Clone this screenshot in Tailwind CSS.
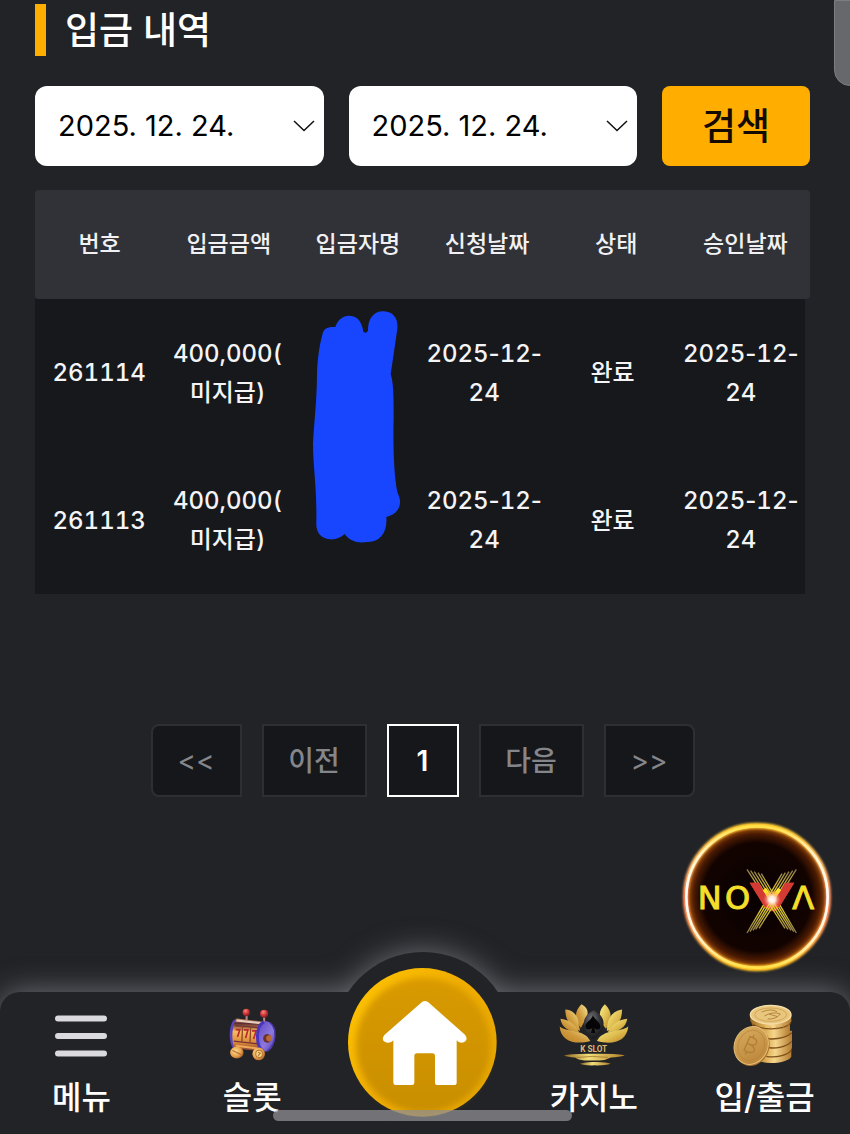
<!DOCTYPE html>
<html lang="ko">
<head>
<meta charset="utf-8">
<meta name="viewport" content="width=device-width, initial-scale=1">
<title>입금 내역</title>
<script src="https://cdn.jsdelivr.net/npm/@tailwindcss/browser@4"></script>
</head>
<body class="min-h-screen flex flex-col overflow-x-hidden bg-[#222326] text-white font-['Inter','Noto_Sans_CJK_KR',sans-serif]">

<main class="flex-1 pt-1 pl-[35px] pr-10">
  <h1 class="h-[52px] border-l-[11px] border-[#ffae00] pl-[19px] text-[37px] leading-[54px] font-medium">입금 내역</h1>

  <form class="mt-[30px] flex gap-[25px]">
    <div class="relative flex-1">
      <select aria-label="시작일" class="h-20 w-full appearance-none rounded-xl bg-white pl-[23px] pr-12 text-[29px] text-black"><option>2025. 12. 24.</option></select>
      <svg class="pointer-events-none absolute right-2 top-[34px] h-3 w-6" viewBox="0 0 24 12" fill="none" stroke="#111" stroke-width="1.5"><path d="M2 1l10 9.500L22 1"/></svg>
    </div>
    <div class="relative flex-1">
      <select aria-label="종료일" class="h-20 w-full appearance-none rounded-xl bg-white pl-[23px] pr-12 text-[29px] text-black"><option>2025. 12. 24.</option></select>
      <svg class="pointer-events-none absolute right-2 top-[34px] h-3 w-6" viewBox="0 0 24 12" fill="none" stroke="#111" stroke-width="1.5"><path d="M2 1l10 9.500L22 1"/></svg>
    </div>
    <button type="button" class="h-20 w-[148px] rounded-lg bg-[#ffae00] text-[37px] leading-none font-medium text-[#140a00]">검색</button>
  </form>

  <table class="mt-6 block text-center text-2xl font-medium tabular-nums">
    <thead class="block">
      <tr class="grid h-[109px] grid-cols-6 items-center rounded-sm bg-[#313237] text-[23px] text-[#f1f1f4]">
        <th class="font-medium">번호</th><th class="font-medium">입금금액</th><th class="font-medium">입금자명</th><th class="font-medium">신청날짜</th><th class="font-medium">상태</th><th class="font-medium">승인날짜</th>
      </tr>
    </thead>
    <tbody class="mr-[5px] block bg-[#17181c] leading-[39px] text-[#f4f4f6]">
      <tr class="grid h-[147px] grid-cols-6 items-center">
        <td>261114</td>
        <td>400,000(<br>미지급)</td>
        <td class="relative h-full">
          <svg class="absolute left-[21px] top-3 h-[232px] w-[88px]" viewBox="38 32 264 696" fill="#1846ff" role="img" aria-label="가려진 이름"><path d="M66 104C68 84 84 78 105 80C112 58 128 46 146 46C168 46 184 60 189 94L196 98L203 92C202 56 220 32 250 33C280 34 294 56 291 86L271 222C280 246 280 300 280 350C278 430 280 520 291 575C296 588 300 596 299 608C297 630 282 644 258 650C262 700 236 727 200 725C172 730 148 722 133 701C116 716 100 718 88 717C62 714 46 696 48 665C50 560 38 500 38 430C40 380 50 300 50 220C51 180 58 130 66 104Z"/></svg>
        </td>
        <td>2025<span class="normal-nums">-</span>12<span class="normal-nums">-</span><br>24</td>
        <td>완료</td>
        <td>2025<span class="normal-nums">-</span>12<span class="normal-nums">-</span><br>24</td>
      </tr>
      <tr class="grid h-[148px] grid-cols-6 items-center">
        <td>261113</td>
        <td>400,000(<br>미지급)</td>
        <td></td>
        <td>2025<span class="normal-nums">-</span>12<span class="normal-nums">-</span><br>24</td>
        <td>완료</td>
        <td>2025<span class="normal-nums">-</span>12<span class="normal-nums">-</span><br>24</td>
      </tr>
    </tbody>
  </table>

  <nav aria-label="페이지" class="mt-[130px] mb-10 flex justify-center gap-5 text-[28px] text-[#85868a]">
    <button type="button" class="h-[73px] w-[91px] rounded-l-lg border-2 border-[#2e2f33] bg-[#16171b]">&lt;&lt;</button>
    <button type="button" class="h-[73px] w-[105px] border-2 border-[#2e2f33] bg-[#16171b] font-medium">이전</button>
    <button type="button" aria-current="page" class="h-[73px] w-[72px] border-2 border-white bg-[#16171b] font-semibold text-white">1</button>
    <button type="button" class="h-[73px] w-[105px] border-2 border-[#2e2f33] bg-[#16171b] font-medium">다음</button>
    <button type="button" class="h-[73px] w-[91px] rounded-r-lg border-2 border-[#2e2f33] bg-[#16171b]">&gt;&gt;</button>
  </nav>
</main>

<div class="fixed -right-4 top-0 h-[86px] w-8 rounded-b-2xl border border-[#7c7d80] bg-[#67686b]"></div>

<footer class="sticky bottom-0 h-[142px]">
  <div class="absolute inset-0 drop-shadow-[0_0_15px_rgba(190,190,200,0.5)]">
    <div class="absolute inset-0 rounded-t-[20px] bg-[#222326]"></div>
    <div class="absolute -top-10 left-1/2 -ml-[92px] size-[180px] rounded-full bg-[#222326]"></div>
  </div>

  <nav aria-label="주 메뉴" class="relative -ml-1 grid h-full grid-cols-5 text-[32px] leading-10 font-medium">
    <a href="#menu" class="flex flex-col items-center gap-3 pt-3">
      <svg class="h-[62px] w-[52px]" viewBox="0 0 52 62" stroke="#d9d9de" stroke-width="6" stroke-linecap="round"><path d="M3 14.500H49M3 32H49M3 49.500H49"/></svg>
      <span>메뉴</span>
    </a>
    <a href="#slot" class="flex flex-col items-center gap-3 pt-3">
      <svg class="h-[62px] w-[50px]" viewBox="42 14 144 184">
        <defs>
          <linearGradient id="drum" x1="0" y1="0" x2="0" y2="1"><stop offset="0" stop-color="#c9925a"/><stop offset=".15" stop-color="#5d2c30"/><stop offset=".4" stop-color="#f8bd5c"/><stop offset=".75" stop-color="#d98436"/><stop offset="1" stop-color="#7d3e35"/></linearGradient>
          <linearGradient id="side" x1="0" y1="0" x2="1" y2="1"><stop offset="0" stop-color="#5b43c4"/><stop offset=".6" stop-color="#8d79dd"/><stop offset="1" stop-color="#5136a7"/></linearGradient>
          <radialGradient id="knob" cx=".4" cy=".3" r=".7"><stop offset="0" stop-color="#ff8a7c"/><stop offset=".5" stop-color="#d43a3c"/><stop offset="1" stop-color="#7d1a25"/></radialGradient>
          <radialGradient id="wheel" cx=".4" cy=".4" r=".7"><stop offset="0" stop-color="#ffdf92"/><stop offset=".6" stop-color="#e6a04b"/><stop offset="1" stop-color="#8b4b22"/></radialGradient>
        </defs>
        <path d="M98 44V66M150 50V70" stroke="#b98a8c" stroke-width="6"/>
        <path d="M62 60C46 72 42 124 58 146L72 150L74 58Z" fill="#5944bd"/>
        <path d="M68 57L148 66L138 154L62 146C52 124 54 76 68 57Z" fill="url(#drum)"/>
        <path d="M70 60L150 68L148 75L66 66Z" fill="#e8cdbd"/>
        <path d="M64 78L132 84M60 124L130 132" stroke="#70313a" stroke-width="4"/>
        <path d="M86 80L84 126M110 82L108 130" stroke="#8d482d" stroke-width="4"/>
        <path d="M66 90H78L71 112M90 91H102L95 115M114 94H126L119 118" fill="none" stroke="#ba2b2b" stroke-width="5"/>
        <path d="M66 138L130 146" stroke="#efaa58" stroke-width="6"/>
        <ellipse cx="155" cy="110" rx="27" ry="45" fill="url(#side)"/>
        <path d="M150 67C124 78 124 142 148 154" fill="none" stroke="#4936bd" stroke-width="9"/>
        <path d="M166 68C190 84 188 132 158 154" fill="none" stroke="#4937ac" stroke-width="4"/>
        <ellipse cx="159" cy="116" rx="12" ry="13" fill="#693230"/><ellipse cx="165" cy="116" rx="9" ry="9" fill="#b96935"/>
        <circle cx="97" cy="39" r="11" fill="url(#knob)"/><circle cx="150" cy="43" r="12" fill="url(#knob)"/>
        <ellipse cx="69" cy="158" rx="20" ry="18" fill="url(#wheel)"/><path d="M56 152L82 164" stroke="#bd7135" stroke-width="4"/>
        <circle cx="134" cy="162" r="19" fill="url(#wheel)"/><ellipse cx="135" cy="162" rx="10" ry="11" fill="#f5d685" stroke="#b57430" stroke-width="3"/><path d="M132 157L139 160L132 168" fill="none" stroke="#b57430" stroke-width="3"/>
      </svg>
      <span>슬롯</span>
    </a>
    <a href="#home" aria-label="홈" class="-mt-6 size-[149px] justify-self-center rounded-full">
      <svg class="size-full" viewBox="0 0 447 447">
        <defs>
          <linearGradient id="gold" x1="0" y1="0" x2="0" y2="1"><stop offset="0" stop-color="#d99a00"/><stop offset="1" stop-color="#c98f00"/></linearGradient>
          <linearGradient id="rim" x1="0" y1=".1" x2="1" y2=".8"><stop offset="0" stop-color="#ffc400"/><stop offset=".5" stop-color="#f0ad00"/><stop offset="1" stop-color="#e6a600"/></linearGradient>
          <filter id="soft" x="-10%" y="-10%" width="120%" height="120%"><feGaussianBlur stdDeviation="9"/></filter>
        </defs>
        <circle cx="223" cy="223" r="223" fill="url(#rim)"/>
        <circle cx="226" cy="232" r="202" fill="url(#gold)" filter="url(#soft)"/>
        <path d="M222 102Q231 96 240 102L351 200Q360 212 352 220Q344 227 332 222L326 217V344Q326 351 318 351H269Q261 351 261 344V264Q261 256 253 256H207Q199 256 199 264V344Q199 351 192 351H143Q136 351 136 344V217L130 222Q116 227 108 220Q100 212 110 200Z" fill="#fff"/>
      </svg>
    </a>
    <a href="#casino" class="flex flex-col items-center gap-3 pt-3">
      <svg class="h-[62px] w-[70px]" viewBox="88 75 210 188">
        <defs>
          <linearGradient id="leafL" x1="0" y1="1" x2="1" y2="0"><stop offset="0" stop-color="#b98024"/><stop offset=".45" stop-color="#cf9a3c"/><stop offset="1" stop-color="#f7e99b"/></linearGradient>
          <linearGradient id="leafR" x1="0" y1="0" x2="1" y2="1"><stop offset="0" stop-color="#f8ef8c"/><stop offset=".55" stop-color="#dfbd50"/><stop offset="1" stop-color="#b77e20"/></linearGradient>
          <linearGradient id="base" x1="0" y1="0" x2="1" y2="0"><stop offset="0" stop-color="#8d641d"/><stop offset=".4" stop-color="#f1df7a"/><stop offset="1" stop-color="#b07e25"/></linearGradient>
          <radialGradient id="gem" cx=".4" cy=".3" r=".7"><stop offset="0" stop-color="#77777c"/><stop offset=".5" stop-color="#37373c"/><stop offset="1" stop-color="#17171b"/></radialGradient>
        </defs>
        <g fill="url(#leafL)">
          <path d="M155 76C176 88 180 104 164 128L153 148C132 122 134 96 155 76Z"/>
          <path d="M106 92C132 94 146 112 147 140L151 156C120 146 106 122 106 92Z"/>
          <path d="M91 120C116 122 132 134 148 160C116 160 95 146 91 120Z"/>
          <path d="M89 143C108 160 164 150 182 187C136 200 92 188 89 143Z"/>
        </g>
        <g fill="url(#leafR)">
          <path d="M226 76C248 96 250 124 229 150C206 122 204 96 226 76Z"/>
          <path d="M278 92C279 122 264 148 232 157C232 118 248 97 278 92Z"/>
          <path d="M294 120C289 148 268 160 235 160C251 134 268 123 294 120Z"/>
          <path d="M297 143C292 190 248 200 202 187C220 150 276 160 297 143Z"/>
        </g>
        <path d="M192 94C234 116 230 152 192 182C154 152 150 116 192 94Z" fill="url(#gem)"/>
        <path d="M190 108C194 124 214 130 212 145C210 155 198 154 194 148L197 163H184L188 148C180 154 168 153 167 144C166 130 186 124 190 108Z" fill="#050507"/>
        <text x="192" y="220" text-anchor="middle" font-family="Roboto, sans-serif" font-weight="700" font-size="25" fill="#d9b777">K SLOT</text>
        <path d="M102 231Q120 225 192 226Q270 225 286 231Q270 236 244 237Q230 245 210 246H164Q144 244 136 237Q112 236 102 231Z" fill="url(#base)"/>
        <path d="M150 256Q170 250 194 251Q226 250 244 256Q226 262 194 261Q164 262 150 256Z" fill="url(#base)"/>
        <path d="M140 237Q190 231 236 237" stroke="#8f661e" stroke-width="2" fill="none"/>
      </svg>
      <span>카지노</span>
    </a>
    <a href="#cash" class="flex flex-col items-center gap-3 pt-3">
      <svg class="mr-1 h-[62px] w-[62px]" viewBox="603 78 186 186">
        <defs>
          <linearGradient id="edge" x1="0" y1="0" x2="1" y2="0"><stop offset="0" stop-color="#9b681f"/><stop offset=".35" stop-color="#e2b45c"/><stop offset=".55" stop-color="#f5d68d"/><stop offset="1" stop-color="#b27b2f"/></linearGradient>
          <linearGradient id="face" x1="0" y1="0" x2="1" y2="1"><stop offset="0" stop-color="#d9ae60"/><stop offset="1" stop-color="#b98136"/></linearGradient>
        </defs>
        <path d="M668 214V238C680 262 766 260 781 236V210Z" fill="url(#edge)"/>
        <path d="M672 190V216C690 238 772 234 783 210V184Z" fill="url(#edge)"/>
        <path d="M674 164V190C692 214 776 206 783 186V158Z" fill="url(#edge)"/>
        <path d="M670 138V160C684 188 764 186 777 162V134Z" fill="url(#edge)"/>
        <path d="M658 110V128C668 156 768 158 781 130V110Z" fill="url(#edge)"/>
        <path d="M662 136C684 158 758 158 779 136M690 178C720 188 764 182 782 164M700 207C730 214 766 208 782 190M706 235C736 240 768 232 781 217" fill="none" stroke="#805019" stroke-width="4"/>
        <path d="M665 132V143M680 139V150M698 144V154M718 146V156M738 145V155M758 140V151M772 133V144" stroke="#b98539" stroke-width="2"/>
        <ellipse cx="719" cy="110" rx="61" ry="28" fill="#e9c67e" stroke="#f5dfaa" stroke-width="4"/>
        <ellipse cx="719" cy="110" rx="48" ry="20" fill="none" stroke="#c79546" stroke-width="2"/>
        <path d="M692 102Q720 90 738 101M700 114Q725 99 748 108Q736 124 710 123M714 108L740 116" fill="none" stroke="#b5853d" stroke-width="3"/>
        <g transform="rotate(24 662 204)">
          <ellipse cx="665" cy="205" rx="50" ry="59" fill="#a97229"/>
          <ellipse cx="660" cy="203" rx="50" ry="58" fill="url(#face)" stroke="#e5c17a" stroke-width="3"/>
          <ellipse cx="660" cy="203" rx="39" ry="47" fill="none" stroke="#b98439" stroke-width="2"/>
          <path d="M646 178V226M646 180H660Q674 182 671 194Q668 202 648 202Q676 202 675 215Q672 228 646 225M655 172V180M655 227V235" fill="none" stroke="#b27d36" stroke-width="4"/>
        </g>
      </svg>
      <span>입/출금</span>
    </a>
  </nav>

  <a href="#nova" aria-label="NOVA" class="absolute bottom-[162px] right-[18px] size-[150px]">
    <svg class="size-full overflow-visible" viewBox="37 35 450 450">
      <defs>
        <radialGradient id="disc"><stop offset="0" stop-color="#080101"/><stop offset=".74" stop-color="#120300"/><stop offset=".86" stop-color="#4a1a02"/><stop offset=".96" stop-color="#a9560d"/><stop offset="1" stop-color="#c87a1c"/></radialGradient>
        <linearGradient id="ring" x1="0" y1="0" x2="0" y2="1"><stop offset="0" stop-color="#ffcf30"/><stop offset=".3" stop-color="#ffb36a"/><stop offset=".5" stop-color="#f07e5a"/><stop offset=".75" stop-color="#ff9a52"/><stop offset="1" stop-color="#ffc524"/></linearGradient>
        <linearGradient id="core" x1="0" y1="0" x2="0" y2="1"><stop offset="0" stop-color="#ffe14a"/><stop offset=".2" stop-color="#fff3c8"/><stop offset=".5" stop-color="#fff"/><stop offset=".8" stop-color="#fff3c8"/><stop offset="1" stop-color="#ffe14a"/></linearGradient>
        <linearGradient id="ray" x1="0" y1="0" x2="0" y2="1"><stop offset="0" stop-color="#8a7a4c"/><stop offset=".5" stop-color="#ffe928"/><stop offset="1" stop-color="#8a7a4c"/></linearGradient>
        <radialGradient id="spark"><stop offset="0" stop-color="#fff"/><stop offset=".35" stop-color="#ffe9d9"/><stop offset="1" stop-color="#ff5a3c" stop-opacity="0"/></radialGradient>
        <filter id="glow" x="-10%" y="-10%" width="120%" height="120%"><feGaussianBlur stdDeviation="3"/></filter>
      </defs>
      <circle cx="262" cy="260" r="220" fill="url(#disc)"/>
      <circle cx="262" cy="260" r="214" fill="none" stroke="url(#ring)" stroke-width="17" filter="url(#glow)"/>
      <circle cx="262" cy="260" r="212" fill="none" stroke="url(#core)" stroke-width="8"/>
      <path d="M240 217H268L306 282L346 217H374L328 292Q308 314 286 292Z" fill="#d33a34"/>
      <path d="M232 177L346 354M243 181L355 357M254 184L364 360M265 187L372 364M275 190L380 368M380 177L268 354M369 181L258 357M358 184L250 360M347 187L241 364M337 190L232 368" stroke="url(#ray)" stroke-width="4"/>
      <path d="M240 217H268L300 276L286 292ZM346 217H374L328 292L314 274Z" fill="#d33a34"/>
      <path d="M284 236L306 266L330 236" fill="none" stroke="#ffe32a" stroke-width="12"/>
      <circle cx="307" cy="268" r="28" fill="url(#spark)"/>
      <g font-family="DejaVu Sans, sans-serif" font-size="96" fill="#f4df2b" stroke="#f4df2b" stroke-width="3"><text x="84" y="295">N</text><text x="166" y="295">O</text><text x="368" y="295">Λ</text></g>
    </svg>
  </a>
  <div class="pointer-events-none absolute bottom-[13px] left-1/2 -ml-[152px] h-[11px] w-[299px] rounded-full bg-[#8e8e93]/75"></div>
</footer>
</body>
</html>
